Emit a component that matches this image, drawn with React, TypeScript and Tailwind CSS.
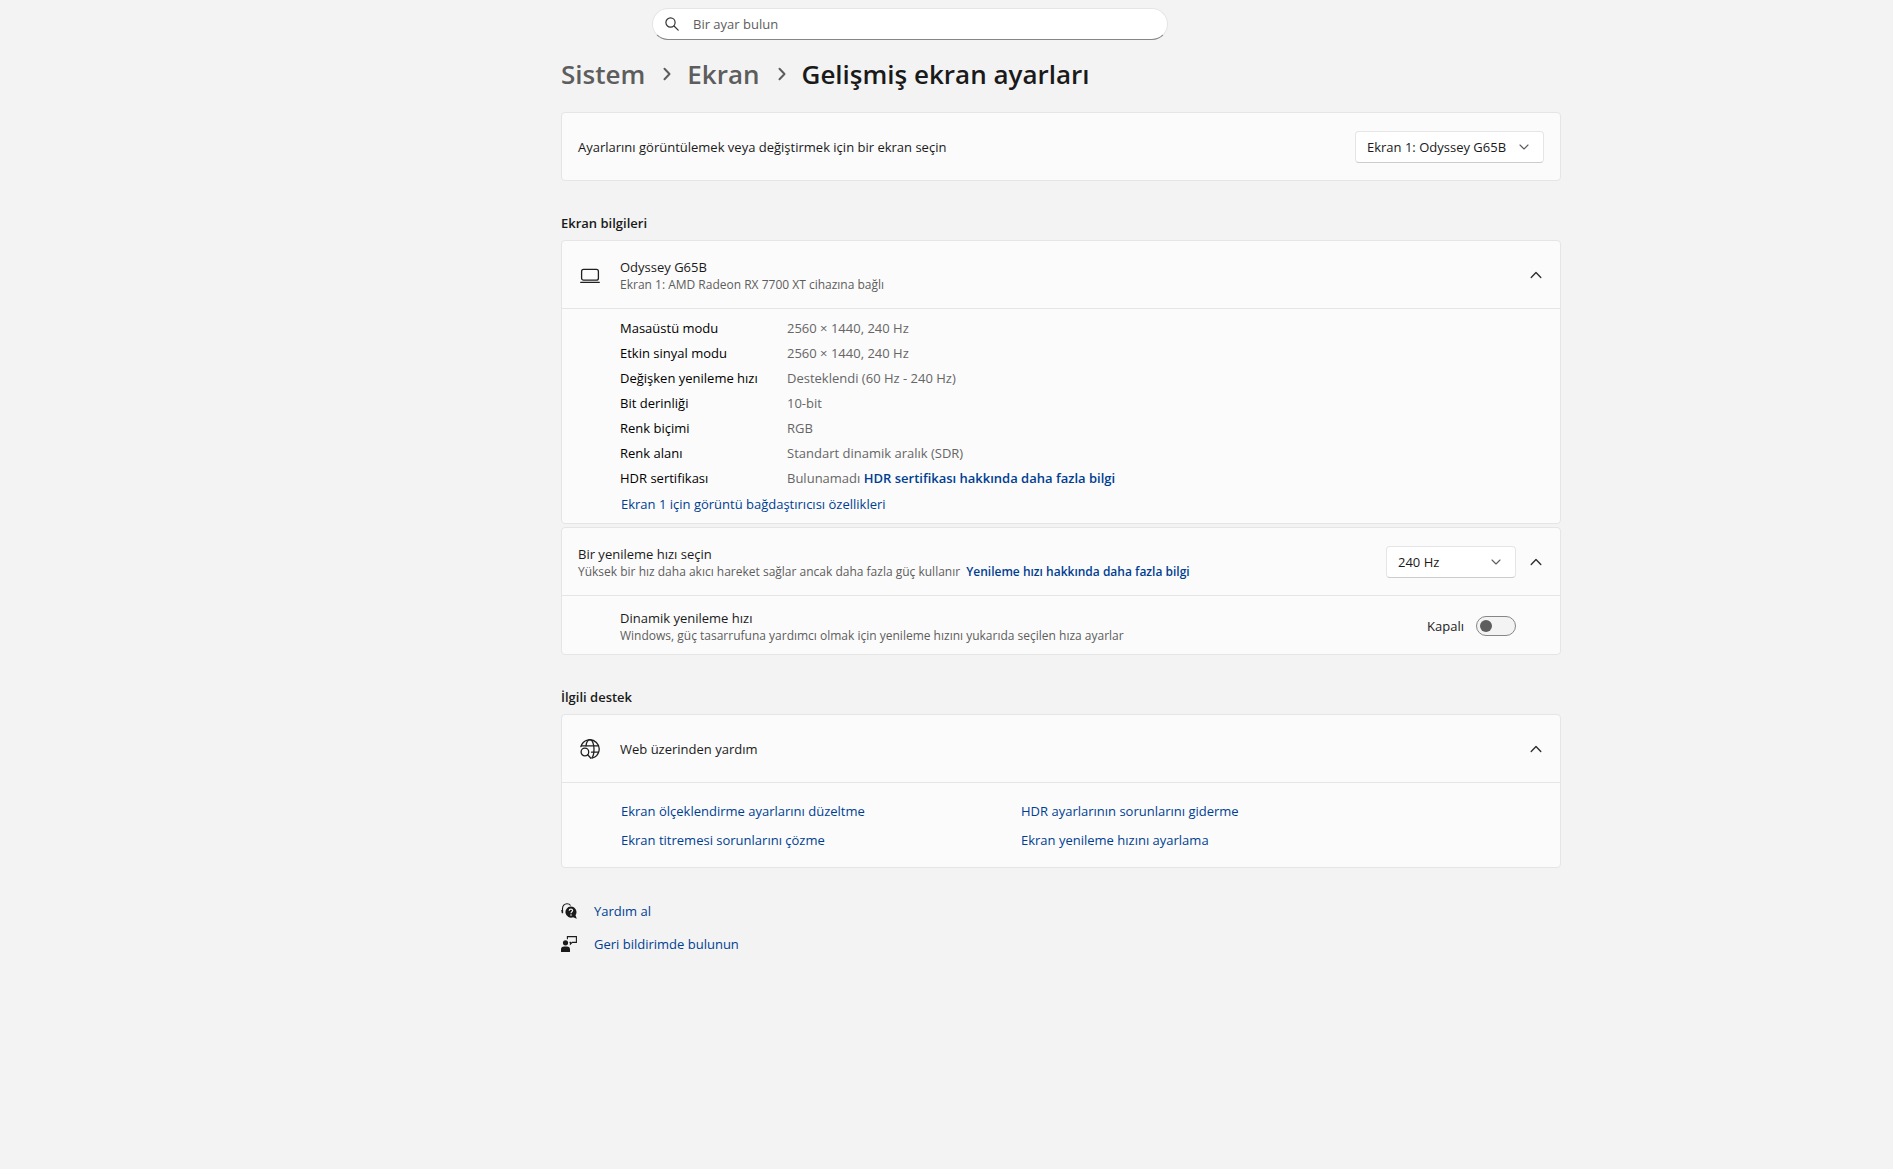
import { useState } from 'react'
import type { ReactNode } from 'react'

// ---------- data ----------

const SPECS = [
  { label: 'Masaüstü modu', value: '2560 × 1440, 240 Hz' },
  { label: 'Etkin sinyal modu', value: '2560 × 1440, 240 Hz' },
  { label: 'Değişken yenileme hızı', value: 'Desteklendi (60 Hz - 240 Hz)' },
  { label: 'Bit derinliği', value: '10-bit' },
  { label: 'Renk biçimi', value: 'RGB' },
  { label: 'Renk alanı', value: 'Standart dinamik aralık (SDR)' },
  { label: 'HDR sertifikası', value: 'Bulunamadı', link: 'HDR sertifikası hakkında daha fazla bilgi' },
]

const HELP_LINKS = [
  'Ekran ölçeklendirme ayarlarını düzeltme',
  'HDR ayarlarının sorunlarını giderme',
  'Ekran titremesi sorunlarını çözme',
  'Ekran yenileme hızını ayarlama',
]

// ---------- icons ----------

function SearchIcon() {
  return (
    <svg width="14" height="14" viewBox="0 0 14 14" fill="none" stroke="#333" strokeWidth="1.2" strokeLinecap="round">
      <circle cx="5.5" cy="5.5" r="4.6" />
      <path d="M9 9l4.2 4.2" />
    </svg>
  )
}

function CrumbIcon() {
  return (
    <svg width="8" height="14" viewBox="0 0 8 14" fill="none" stroke="#5d5d5d" strokeWidth="2" strokeLinecap="round" strokeLinejoin="round">
      <path d="M1.5 1.8L6.5 7l-5 5.2" />
    </svg>
  )
}

function LaptopIcon() {
  return (
    <svg width="20" height="20" viewBox="0 0 20 20" fill="none" stroke="#1f1f1f" strokeWidth="1.3" strokeLinecap="round">
      <rect x="1.6" y="4.4" width="16.8" height="10.8" rx="2" />
      <path d="M.7 17.3h18.6" />
    </svg>
  )
}

function GlobeSearchIcon() {
  return (
    <svg width="20" height="20" viewBox="0 0 20 20" fill="none" stroke="#1f1f1f" strokeWidth="1.3" strokeLinecap="round">
      <path d="M.9 7.600A9.300 9.300 0 1 1 12.500 19" />
      <path d="M1.500 6.800h17M11.500 13.200h7" />
      <path d="M6 6.800C6.500 3.400 8 .7 10 .7c2.300 0 4 4.100 4 9.300 0 4-.8 7.300-2 8.700" />
      <circle cx="4.900" cy="13" r="3.800" />
      <path d="M7.700 15.800l3.200 3.400" />
    </svg>
  )
}

function HelpIcon() {
  return (
    <svg width="16" height="16" viewBox="0 0 16 16" fill="none">
      <path d="M1.500 7V5.600C1.500 2.800 3.400.8 6 .8c1.600 0 2.800.6 3.600 1.700" stroke="#1a1a1a" strokeWidth="1.100" />
      <path d="M.2 7h1.900v3.300H.8z" fill="#1a1a1a" />
      <path d="M9.800 3.500a5.600 5.600 0 0 1 4.700 8.700l1.300 3.500-3.700-1.400A5.600 5.600 0 1 1 9.800 3.500z" fill="#1a1a1a" />
      <path d="M8.200 7.700c0-1 .7-1.600 1.700-1.600s1.700.6 1.700 1.500c0 1.200-1.600 1.200-1.600 2.600" stroke="#f3f3f3" strokeWidth="1.200" />
      <circle cx="10" cy="12" r=".8" fill="#f3f3f3" />
    </svg>
  )
}

function FeedbackIcon() {
  return (
    <svg width="16" height="16" viewBox="0 0 16 16" fill="none">
      <circle cx="4.500" cy="6.800" r="2.600" fill="#1a1a1a" />
      <path d="M0 16v-2.600a3 3 0 0 1 3-3h3a3 3 0 0 1 3 3V16z" fill="#1a1a1a" />
      <path d="M6.400 3.200V.6h9v5.800h-4.200L9.400 8.200V6.400H8.500" stroke="#1a1a1a" strokeWidth="1.100" />
    </svg>
  )
}

// ---------- building blocks ----------

function ExpandButton({ open, label, onClick }: { open: boolean; label: string; onClick: () => void }) {
  return (
    <button
      type="button"
      aria-expanded={open}
      aria-label={label}
      onClick={onClick}
      className="flex size-8 items-center justify-center rounded hover:bg-black/5"
    >
      <svg
        width="12" height="8" viewBox="0 0 12 8" fill="none" stroke="#2b2b2b" strokeWidth="1.3"
        strokeLinecap="round" strokeLinejoin="round"
        className={open ? '' : 'rotate-180'}
      >
        <path d="M1.200 6.500L6 1.500l4.800 5" />
      </svg>
    </button>
  )
}

function Select({ id, label, options, className }: { id: string; label: string; options: string[]; className: string }) {
  return (
    <div className={`relative ${className}`}>
      <select
        id={id}
        aria-label={label}
        className="w-full appearance-none rounded border border-[#e5e5e5] border-b-[#cccccc] bg-white py-[5px] pr-8 pl-[11px] text-[#1a1a1a]"
      >
        {options.map(o => <option key={o}>{o}</option>)}
      </select>
      <svg
        width="10" height="6" viewBox="0 0 10 6" fill="none" stroke="#5d5d5d" strokeWidth="1.100"
        strokeLinecap="round" strokeLinejoin="round"
        className="pointer-events-none absolute top-[13px] right-[15px]"
      >
        <path d="M1 1l4 4 4-4" />
      </svg>
    </div>
  )
}

function Card({ children }: { children: ReactNode }) {
  return <div className="rounded border border-[#e5e5e5] bg-[#fbfbfb]">{children}</div>
}

function CardHeader({ children }: { children: ReactNode }) {
  return <div className="flex min-h-[67px] items-center pl-4">{children}</div>
}

function Caption({ children }: { children: ReactNode }) {
  return <p className="flex gap-[6px] text-xs leading-4 text-[#5d5d5d]">{children}</p>
}

function TextLink({ children, bold }: { children: ReactNode; bold?: boolean }) {
  return (
    <a href="#" className={bold ? 'font-semibold text-[#003e92] hover:underline' : 'text-[#003e92] hover:underline'}>
      {children}
    </a>
  )
}

// ---------- page ----------

export default function App() {
  const [infoOpen, setInfoOpen] = useState(true)
  const [rateOpen, setRateOpen] = useState(true)
  const [helpOpen, setHelpOpen] = useState(true)
  const [dynamic, setDynamic] = useState(false)

  return (
    <div className="min-h-screen bg-[#f3f3f3] font-['Open_Sans','Noto_Sans',sans-serif] text-[13px] leading-5 text-[#1a1a1a]">

      {/* Search */}
      <header className="flex justify-center pt-2 pr-[73px]">
        <div className="flex h-8 w-full max-w-[516px] items-center gap-[14px] rounded-full border border-[#e5e5e5] border-b-[#868686] bg-white pr-4 pl-3">
          <SearchIcon />
          <input
            type="search"
            aria-label="Bir ayar bulun"
            placeholder="Bir ayar bulun"
            className="min-w-0 flex-1 bg-transparent outline-none placeholder:text-[#5d5d5d]"
          />
        </div>
      </header>

      <main className="pl-[229px]">
        <div className="mx-auto max-w-[1000px]">

          {/* Breadcrumb */}
          <nav className="flex items-center pt-[15px] pb-[19px] text-[26px] leading-[38px] font-semibold">
            <a href="#" className="text-[#5d5d5d]">Sistem</a>
            <span className="pr-4 pl-[18px]"><CrumbIcon /></span>
            <a href="#" className="text-[#5d5d5d]">Ekran</a>
            <span className="pr-4 pl-[18px]"><CrumbIcon /></span>
            <h1>Gelişmiş ekran ayarları</h1>
          </nav>

          <Card>
            <CardHeader>
              <p className="flex-1">Ayarlarını görüntülemek veya değiştirmek için bir ekran seçin</p>
              <Select id="display" label="Ekran" options={['Ekran 1: Odyssey G65B']} className="mr-4 w-[189px]" />
            </CardHeader>
          </Card>

          {/* Display information */}
          <h2 className="pt-8 pb-[7px] font-semibold">Ekran bilgileri</h2>
          <div className="flex flex-col gap-[3px]">
            <Card>
              <CardHeader>
                <span className="flex w-[42px] pl-[2px]"><LaptopIcon /></span>
                <div className="flex-1">
                  <p>Odyssey G65B</p>
                  <Caption>Ekran 1: AMD Radeon RX 7700 XT cihazına bağlı</Caption>
                </div>
                <div className="pr-2">
                  <ExpandButton open={infoOpen} label="Ekran bilgileri" onClick={() => setInfoOpen(!infoOpen)} />
                </div>
              </CardHeader>
              {infoOpen && (
                <div className="border-t border-[#e5e5e5] pt-[6px] pb-[9px] pl-[58px]">
                  <table className="mb-1">
                    <tbody>
                      {SPECS.map(s => (
                        <tr key={s.label} className="h-[25px]">
                          <th scope="row" className="w-[167px] text-left font-normal text-black">{s.label}</th>
                          <td className="text-[#666666]">
                            {s.value}
                            {s.link && <> <TextLink bold>{s.link}</TextLink></>}
                          </td>
                        </tr>
                      ))}
                    </tbody>
                  </table>
                  <p className="pl-px"><TextLink>Ekran 1 için görüntü bağdaştırıcısı özellikleri</TextLink></p>
                </div>
              )}
            </Card>

            <Card>
              <CardHeader>
                <div className="flex-1">
                  <p>Bir yenileme hızı seçin</p>
                  <Caption>
                    Yüksek bir hız daha akıcı hareket sağlar ancak daha fazla güç kullanır
                    <TextLink bold>Yenileme hızı hakkında daha fazla bilgi</TextLink>
                  </Caption>
                </div>
                <Select id="rate" label="Yenileme hızı" options={['240 Hz']} className="mr-1 w-[130px]" />
                <div className="pr-2">
                  <ExpandButton open={rateOpen} label="Yenileme hızı" onClick={() => setRateOpen(!rateOpen)} />
                </div>
              </CardHeader>
              {rateOpen && (
                <div className="flex items-center border-t border-[#e5e5e5] pt-3 pr-11 pb-[10px] pl-[58px]">
                  <div className="flex-1">
                    <p>Dinamik yenileme hızı</p>
                    <Caption>
                      Windows, güç tasarrufuna yardımcı olmak için yenileme hızını yukarıda seçilen hıza ayarlar
                    </Caption>
                  </div>
                  <label htmlFor="dynamic" className="pr-3">{dynamic ? 'Açık' : 'Kapalı'}</label>
                  <input
                    id="dynamic"
                    type="checkbox"
                    role="switch"
                    checked={dynamic}
                    onChange={e => setDynamic(e.target.checked)}
                    className="flex h-5 w-10 appearance-none items-center rounded-full border border-[#868686] bg-[#f3f3f3] px-[3px]
                               before:size-3 before:rounded-full before:bg-[#5d5d5d]
                               checked:justify-end checked:bg-[#005fb8] checked:before:bg-white"
                  />
                </div>
              )}
            </Card>
          </div>

          {/* Related support */}
          <h2 className="pt-8 pb-[7px] font-semibold">İlgili destek</h2>
          <Card>
            <CardHeader>
              <span className="flex w-[42px] pl-[2px]"><GlobeSearchIcon /></span>
              <p className="flex-1">Web üzerinden yardım</p>
              <div className="pr-2">
                <ExpandButton open={helpOpen} label="Web üzerinden yardım" onClick={() => setHelpOpen(!helpOpen)} />
              </div>
            </CardHeader>
            {helpOpen && (
              <ul className="grid grid-cols-[400px_1fr] gap-y-[9px] border-t border-[#e5e5e5] pt-[18px] pb-[17px] pl-[59px]">
                {HELP_LINKS.map(l => <li key={l}><TextLink>{l}</TextLink></li>)}
              </ul>
            )}
          </Card>

          <footer className="flex flex-col gap-[13px] pt-[33px] pb-8">
            <div className="flex items-center gap-[17px]"><HelpIcon /><TextLink>Yardım al</TextLink></div>
            <div className="flex items-center gap-[17px]"><FeedbackIcon /><TextLink>Geri bildirimde bulunun</TextLink></div>
          </footer>

        </div>
      </main>
    </div>
  )
}
